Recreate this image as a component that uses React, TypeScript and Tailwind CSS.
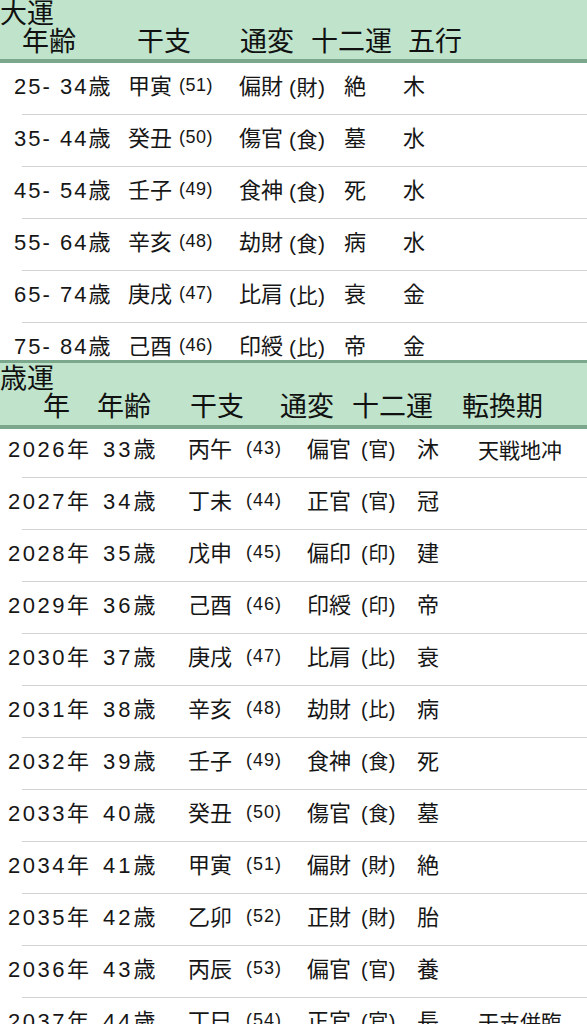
import React from "react";

const FONT = { fontFamily: '"Liberation Sans", "Noto Sans CJK JP", sans-serif' };

const taiun = [
  ["25", "34", "甲寅", "(51)", "偏財", "(財)", "絶", "木"],
  ["35", "44", "癸丑", "(50)", "傷官", "(食)", "墓", "水"],
  ["45", "54", "壬子", "(49)", "食神", "(食)", "死", "水"],
  ["55", "64", "辛亥", "(48)", "劫財", "(食)", "病", "水"],
  ["65", "74", "庚戌", "(47)", "比肩", "(比)", "衰", "金"],
  ["75", "84", "己酉", "(46)", "印綬", "(比)", "帝", "金"],
];

const saiun = [
  ["2026", "33", "丙午", "(43)", "偏官", "(官)", "沐", "天戦地冲"],
  ["2027", "34", "丁未", "(44)", "正官", "(官)", "冠", ""],
  ["2028", "35", "戊申", "(45)", "偏印", "(印)", "建", ""],
  ["2029", "36", "己酉", "(46)", "印綬", "(印)", "帝", ""],
  ["2030", "37", "庚戌", "(47)", "比肩", "(比)", "衰", ""],
  ["2031", "38", "辛亥", "(48)", "劫財", "(比)", "病", ""],
  ["2032", "39", "壬子", "(49)", "食神", "(食)", "死", ""],
  ["2033", "40", "癸丑", "(50)", "傷官", "(食)", "墓", ""],
  ["2034", "41", "甲寅", "(51)", "偏財", "(財)", "絶", ""],
  ["2035", "42", "乙卯", "(52)", "正財", "(財)", "胎", ""],
  ["2036", "43", "丙辰", "(53)", "偏官", "(官)", "養", ""],
  ["2037", "44", "丁巳", "(54)", "正官", "(官)", "長", "干支併臨"],
];

function Sep() {
  return <div className="ml-[22px] h-px bg-[#d2d2d2]" />;
}

function TaiunRow({ r, h }: { r: string[]; h: string }) {
  return (
    <div className={`flex items-center pl-[14px] pb-[3px] text-[22px] leading-none text-[#161616] ${h}`}>
      <div className="w-[114px] flex items-center">
        <span className="tracking-[2px]">{r[0]}- {r[1]}</span>
        <span>歳</span>
      </div>
      <div className="w-[111px] flex">
        <span>{r[2]}</span>
        <span className="ml-[7px] text-[18px] tracking-[0.5px]">{r[3]}</span>
      </div>
      <div className="w-[105px] flex items-center">
        <span>{r[4]}</span>
        <span className="ml-[6px] text-[21px] tracking-[0.5px]">{r[5]}</span>
      </div>
      <div className="w-[59px]">{r[6]}</div>
      <div>{r[7]}</div>
    </div>
  );
}

function SaiunRow({ r, h, extra }: { r: string[]; h: string; extra: string }) {
  return (
    <div className={`flex items-center pl-[8px] text-[22px] leading-none text-[#161616] ${h} ${extra}`}>
      <div className="w-[95px] flex items-center">
        <span className="tracking-[2.5px]">{r[0]}</span>
        <span>年</span>
      </div>
      <div className="w-[85px] flex items-center">
        <span className="tracking-[3px]">{r[1]}</span>
        <span>歳</span>
      </div>
      <div className="w-[119px] flex">
        <span>{r[2]}</span>
        <span className="ml-[14px] text-[18px] tracking-[1px]">{r[3]}</span>
      </div>
      <div className="w-[110px] flex items-center">
        <span>{r[4]}</span>
        <span className="ml-[10px] text-[20px] tracking-[0.5px]">{r[5]}</span>
      </div>
      <div className="w-[61px]">{r[6]}</div>
      <div className="text-[21px]">{r[7]}</div>
    </div>
  );
}

export default function App() {
  return (
    <div className="w-[587px] h-[1024px] overflow-hidden bg-white" style={FONT}>
      {/* 大運 header */}
      <div className="h-[59px] bg-[#bfe4cb] text-[#111] leading-none flex flex-col">
        <div className="text-[27px] pt-[1px]">大運</div>
        <div className="flex text-[27px] pl-[22px] mt-[1px]">
          <div className="w-[115px]">年齢</div>
          <div className="w-[103px]">干支</div>
          <div className="w-[71px]">通変</div>
          <div className="w-[97px]">十二運</div>
          <div>五行</div>
        </div>
      </div>
      <div className="h-[4px] bg-[#7ba78d]" />
      {taiun.slice(0, 5).map((r, i) => (
        <div key={i}>
          <TaiunRow r={r} h="h-[51px]" />
          <Sep />
        </div>
      ))}
      <div className="h-[37px] overflow-hidden">
        <TaiunRow r={taiun[5]} h="h-[51px]" />
      </div>

      {/* 歳運 header */}
      <div className="h-[3px] bg-[#7ba78d]" />
      <div className="h-[62px] bg-[#bfe4cb] text-[#111] leading-none flex flex-col">
        <div className="text-[27px] pt-[3px]">歳運</div>
        <div className="flex text-[27px] pl-[43px] mt-[1px]">
          <div className="w-[54px]">年</div>
          <div className="w-[93px]">年齢</div>
          <div className="w-[90px]">干支</div>
          <div className="w-[72px]">通変</div>
          <div className="w-[110px]">十二運</div>
          <div>転換期</div>
        </div>
      </div>
      <div className="h-[4px] bg-[#7ba78d]" />
      {saiun.map((r, i) => (
        <div key={i}>
          <SaiunRow r={r} h={i === 0 ? "h-[48px]" : "h-[51px]"} extra={i === 0 ? "pb-[6px]" : "pb-[3px]"} />
          <Sep />
        </div>
      ))}
    </div>
  );
}
